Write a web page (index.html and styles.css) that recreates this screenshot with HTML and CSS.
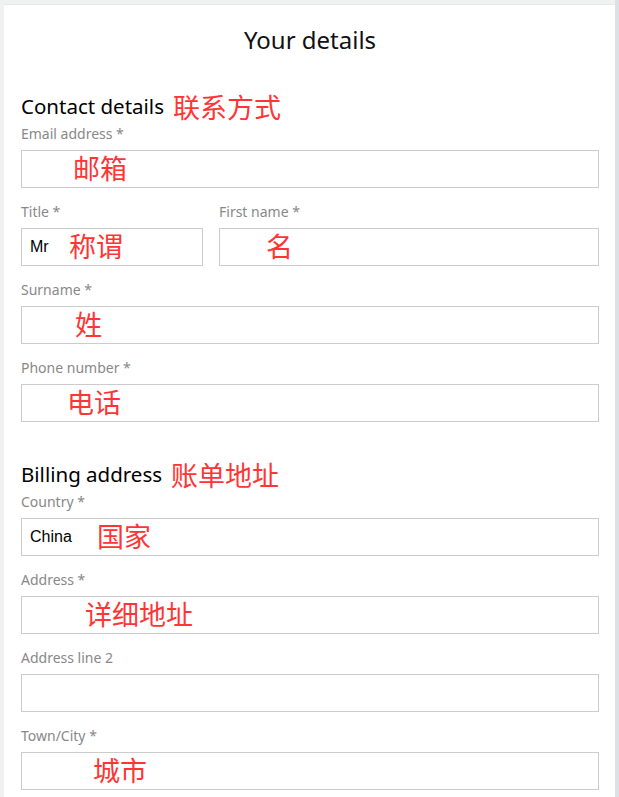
FILE: index.html
```html
<!DOCTYPE html>
<html lang="en">
<head>
  <meta charset="UTF-8" />
  <meta name="viewport" content="width=device-width, initial-scale=1.0"/>
  <title>Your details</title>
  <link rel="stylesheet" href="styles.css">
</head>
<body>

  <div class="card">
    <h1>Your details</h1>

    <!-- Contact details -->
    <h2>Contact details <span class="note">联系方式</span></h2>
    <div class="field">
      <label for="email">Email address *</label>
      <div class="control">
        <input type="email" id="email">
        <span class="note over note-email">邮箱</span>
      </div>
    </div>

    <div class="row">
      <div class="field title-field">
        <label for="title">Title *</label>
        <div class="control">
          <input type="text" id="title" value="Mr">
          <span class="note over note-title">称谓</span>
        </div>
      </div>
      <div class="field grow">
        <label for="first-name">First name *</label>
        <div class="control">
          <input type="text" id="first-name">
          <span class="note over note-first">名</span>
        </div>
      </div>
    </div>

    <div class="field">
      <label for="surname">Surname *</label>
      <div class="control">
        <input type="text" id="surname">
        <span class="note over note-surname">姓</span>
      </div>
    </div>

    <div class="field">
      <label for="phone">Phone number *</label>
      <div class="control">
        <input type="tel" id="phone">
        <span class="note over note-phone">电话</span>
      </div>
    </div>

    <!-- Billing address -->
    <h2 class="billing">Billing address <span class="note">账单地址</span></h2>
    <div class="field">
      <label for="country">Country *</label>
      <div class="control">
        <input type="text" id="country" value="China">
        <span class="note over note-country">国家</span>
      </div>
    </div>

    <div class="field">
      <label for="address">Address *</label>
      <div class="control">
        <input type="text" id="address">
        <span class="note over note-address">详细地址</span>
      </div>
    </div>

    <div class="field">
      <label for="address2">Address line 2</label>
      <div class="control">
        <input type="text" id="address2">
      </div>
    </div>

    <div class="field">
      <label for="city">Town/City *</label>
      <div class="control">
        <input type="text" id="city">
        <span class="note over note-city">城市</span>
      </div>
    </div>
  </div>

</body>
</html>
```

FILE: styles.css
```css
body { margin: 0; padding: 4px 0 0 4px; background: #f0f1f1; border-right: 4px solid #dde1e6; font-family: "Noto Sans", "Open Sans", sans-serif; }
.card { background: #fff; border-top: 1px solid #e8e8e8; padding: 19px 16px 40px 17px; }
h1 { margin: 0 0 36px; font-size: 24px; font-weight: 400; line-height: 32px; text-align: center; color: #111; }
h2 { display: flex; align-items: center; height: 28px; margin: 0 0 3px; font-size: 20.5px; font-weight: 400; color: #000; }
h2.billing { margin-top: 38px; }
.note { font-family: "Noto Sans CJK SC", sans-serif; color: #ff3535; font-size: 27px; line-height: 1; margin-left: 9px; }
.field { margin-bottom: 13px; }
.row { display: flex; gap: 16px; }
.title-field { width: 182px; }
.grow { flex: 1; }
label { display: block; font-size: 14px; line-height: 20px; padding-top: 1px; margin-bottom: 6px; color: #888; }
.control { position: relative; }
input { display: block; box-sizing: border-box; width: 100%; height: 38px; margin: 0; padding: 0 8px; border: 1px solid #ccc; border-radius: 0; font-family: "Liberation Sans", Arial, sans-serif; font-size: 16px; color: #000; }
.over { position: absolute; top: 4px; margin-left: 0; pointer-events: none; }
.note-email { left: 52px; }
.note-title { left: 48px; }
.note-first { left: 47px; }
.note-surname { left: 54px; }
.note-phone { left: 46px; }
.note-country { left: 76px; }
.note-address { left: 64px; }
.note-city { left: 72px; }
```
